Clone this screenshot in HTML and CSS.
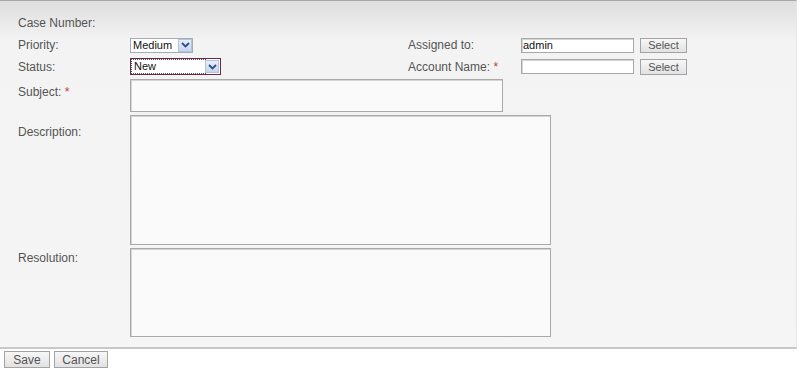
FILE: index.html
```html
<!DOCTYPE html>
<html lang="en">

<head>
    <meta http-equiv="Content-Type" content="text/html; charset=UTF-8">
    <title>Case</title>
    <link rel="stylesheet" href="styles.css">
</head>

<body>
    <form class="case-form">
        <div class="panel">
            <div class="row row-case">
                <label class="lbl">Case Number:</label>
            </div>

            <div class="row row-priority">
                <label class="lbl" for="priority">Priority:</label>
                <div class="field">
                    <span class="sel sel-priority">
                        <select id="priority">
                            <option>Medium</option>
                            <option>High</option>
                            <option>Low</option>
                        </select>
                        <span class="sel-arrow">
                            <svg width="9" height="6" viewBox="0 0 9 6"><path d="M1 1 L4.5 4.5 L8 1" fill="none" stroke="#2d4f84" stroke-width="1.8"/></svg>
                        </span>
                    </span>
                </div>
                <label class="lbl lbl2" for="assigned">Assigned to:</label>
                <input class="txt small" type="text" id="assigned" value="admin">
                <button type="button" class="btn-sm">Select</button>
            </div>

            <div class="row row-status">
                <label class="lbl" for="status">Status:</label>
                <div class="field">
                    <span class="sel sel-status">
                        <select id="status">
                            <option>New</option>
                            <option>Assigned</option>
                            <option>Closed</option>
                        </select>
                        <span class="sel-arrow">
                            <svg width="9" height="6" viewBox="0 0 9 6"><path d="M1 1 L4.5 4.5 L8 1" fill="none" stroke="#2d4f84" stroke-width="1.8"/></svg>
                        </span>
                    </span>
                </div>
                <label class="lbl lbl2" for="account">Account Name: <span class="req">*</span></label>
                <input class="txt small" type="text" id="account">
                <button type="button" class="btn-sm">Select</button>
            </div>

            <div class="row row-subject">
                <label class="lbl" for="subject">Subject: <span class="req">*</span></label>
                <textarea class="txt subject" id="subject"></textarea>
            </div>

            <div class="row row-desc">
                <label class="lbl" for="description">Description:</label>
                <textarea class="txt desc" id="description"></textarea>
            </div>

            <div class="row row-res">
                <label class="lbl" for="resolution">Resolution:</label>
                <textarea class="txt res" id="resolution"></textarea>
            </div>
        </div>

        <div class="actions">
            <button type="button" class="btn-sm btn-save">Save</button>
            <button type="button" class="btn-sm btn-cancel">Cancel</button>
        </div>
    </form>
</body>

</html>
```
FILE: styles.css
```css
body {
    margin: 0;
    font-family: "Liberation Sans", Arial, sans-serif;
    font-size: 12px;
    color: #555555;
    background: #ffffff;
}

.panel {
    width: 778px;
    height: 346px;
    padding-left: 18px;
    border-top: 1px solid #a8a8a8;
    border-right: 1px solid #e6e6e6;
    border-bottom: 2px solid #c8c8c8;
    background: #f5f5f5;
    background-image: linear-gradient(to bottom, #dedede, #f3f3f3 40px, #f5f5f5);
}

.row {
    display: flex;
    align-items: center;
}

.lbl {
    width: 112px;
    flex: none;
}

.lbl2 {
    width: 113px;
}

.field {
    width: 278px;
    flex: none;
}

.req {
    color: #cc3333;
}

.row-case {
    height: 16px;
    margin-top: 14px;
}

.row-priority {
    height: 16px;
    margin-top: 6px;
}

.row-status {
    height: 17px;
    margin-top: 5px;
}

.row-subject,
.row-desc,
.row-res {
    align-items: flex-start;
}

.row-subject {
    margin-top: 4px;
}

.row-subject .lbl {
    padding-top: 6px;
}

.row-desc {
    margin-top: 3px;
}

.row-desc .lbl {
    padding-top: 10px;
}

.row-res {
    margin-top: 3px;
}

.row-res .lbl {
    padding-top: 3px;
}

/* select boxes */
.sel {
    display: inline-flex;
    align-items: center;
    box-sizing: border-box;
    background: #ffffff;
    border: 1px solid #a5acb5;
    height: 15px;
}

.sel select {
    -webkit-appearance: none;
    appearance: none;
    border: none;
    outline: none;
    background: transparent;
    font-family: "Liberation Sans", Arial, sans-serif;
    font-size: 11px;
    color: #111111;
    padding: 0 0 0 2px;
    margin: 0;
    height: 13px;
    line-height: 13px;
}

.sel-priority {
    width: 63px;
}

.sel-priority select {
    width: 47px;
}

.sel-status {
    width: 91px;
    height: 17px;
    border: 1px solid #6e2748;
    padding: 1px;
}

.sel-status select {
    width: 73px;
    height: 13px;
    outline: 1px dotted #555555;
    background: #ffffff;
}

.sel-arrow {
    display: flex;
    align-items: center;
    justify-content: center;
    box-sizing: border-box;
    width: 14px;
    height: 13px;
    margin-left: auto;
    border: 1px solid #b4c4dc;
    background: linear-gradient(to bottom, #e6eefa, #c6d6ee);
}

/* text boxes */
.txt {
    box-sizing: border-box;
    margin: 0;
    border: 1px solid #a9a9a9;
    box-shadow: inset 1px 1px 0 #d4d4d4;
    background: #fafafa;
    font-family: "Liberation Sans", Arial, sans-serif;
    font-size: 11px;
    color: #111111;
    resize: none;
}

.small {
    width: 113px;
    height: 15px;
    padding: 0 1px;
    background: #ffffff;
}

.subject {
    width: 373px;
    height: 33px;
}

.desc {
    width: 421px;
    height: 130px;
}

.res {
    width: 421px;
    height: 89px;
}

/* buttons */
.btn-sm {
    box-sizing: border-box;
    height: 15px;
    width: 47px;
    margin: 0 0 0 6px;
    padding: 0;
    border: 1px solid #a3a3a3;
    background: linear-gradient(to bottom, #f7f7f7, #e2e2e2);
    font-family: "Liberation Sans", Arial, sans-serif;
    font-size: 11px;
    color: #555555;
    cursor: pointer;
}

.row-status .btn-sm {
    height: 16px;
}

.actions {
    display: flex;
    gap: 4px;
    margin-top: 2px;
    padding-left: 4px;
}

.actions .btn-sm {
    margin: 0;
    height: 17px;
    font-size: 12px;
}

.btn-save {
    width: 46px;
}

.btn-cancel {
    width: 54px;
}
```
